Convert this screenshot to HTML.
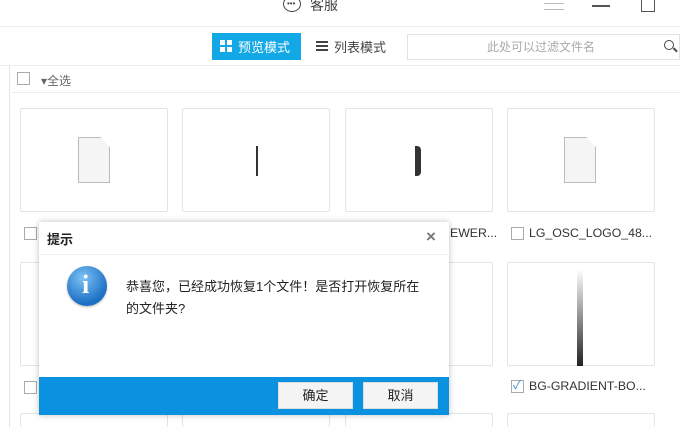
<!DOCTYPE html>
<html><head><meta charset="utf-8"><style>
*{margin:0;padding:0;box-sizing:border-box}
html,body{width:680px;height:427px;overflow:hidden}
body{background:#fff;font-family:"Liberation Sans","Noto Sans CJK SC",sans-serif;position:relative;color:#333}
.a{position:absolute}
.card{position:absolute;width:148px;height:104px;border:1px solid #e4e4e4;border-radius:2px;background:#fff}
.card.s{height:14px;border-bottom:none}
.cb{position:absolute;width:13px;height:13px;border:1px solid #aaa;background:#fff}
.lbl{position:absolute;font-size:12.3px;color:#333;white-space:nowrap}
.doc{position:absolute;width:32px;height:46px;background:#f5f5f5;border:1px solid #bbb;clip-path:polygon(0 0,70% 0,100% 22%,100% 100%,0 100%)}
.btn{position:absolute;top:382px;width:75px;height:27px;background:#f4f4f4;border:1px solid #ddd;font-size:13px;text-align:center;line-height:26px;color:#222}
</style></head><body>
<div class="a" style="left:283px;top:-4px;width:18px;height:16px;border:1.5px solid #444;border-radius:50%"></div>
<div class="a" style="left:287px;top:2px;font-size:8px;line-height:4px;color:#444">•••</div>
<div class="a" style="left:310px;top:-5px;font-size:14px;color:#444">客服</div>
<div class="a" style="left:544px;top:3px;width:20px;height:1px;background:#bbb;box-shadow:0 6px 0 #bbb"></div>
<div class="a" style="left:592px;top:5px;width:18px;height:2px;background:#555"></div>
<div class="a" style="left:641px;top:-3px;width:14px;height:15px;border:1.5px solid #555"></div>
<div class="a" style="left:0;top:26px;width:680px;height:1px;background:#ececec"></div>
<div class="a" style="left:212px;top:33px;width:89px;height:27px;background:#12a8e6"></div>
<div class="a" style="left:220px;top:40px;width:5px;height:5px;background:#fff;box-shadow:7px 0 #fff,0 7px #fff,7px 7px #fff"></div>
<div class="a" style="left:238px;top:37px;font-size:13px;color:#fff">预览模式</div>
<div class="a" style="left:316px;top:41px;width:12px;height:2px;background:#444;box-shadow:0 4px #444,0 8px #444"></div>
<div class="a" style="left:334px;top:37px;font-size:13px;color:#444">列表模式</div>
<div class="a" style="left:407px;top:34px;width:273px;height:26px;border:1px solid #e2e2e2"></div>
<div class="a" style="left:487px;top:38px;font-size:12px;color:#aaa">此处可以过滤文件名</div>
<div class="a" style="left:664px;top:40px;width:10px;height:10px;border:1.5px solid #444;border-radius:50%"></div>
<div class="a" style="left:673px;top:49px;width:5px;height:1.5px;background:#444;transform:rotate(45deg)"></div>
<div class="a" style="left:0;top:65px;width:680px;height:1px;background:#ececec"></div>
<div class="a" style="left:9px;top:66px;width:1px;height:361px;background:#e4e4e4"></div>
<div class="cb" style="left:17px;top:72px"></div>
<div class="a" style="left:41px;top:72px;font-size:12px;color:#666">▾全选</div>
<div class="a" style="left:12px;top:92px;width:668px;height:1px;background:#ececec"></div>
<div class="card" style="left:20px;top:108px"></div>
<div class="card" style="left:182px;top:108px"></div>
<div class="card" style="left:345px;top:108px"></div>
<div class="card" style="left:507px;top:108px"></div>
<div class="doc" style="left:78px;top:137px"></div>
<div class="doc" style="left:564px;top:137px"></div>
<div class="a" style="left:256px;top:146px;width:2px;height:30px;background:#333"></div>
<div class="a" style="left:415px;top:146px;width:6px;height:30px;background:#333;border-radius:0 4px 4px 0"></div>
<div class="cb" style="left:24px;top:227px"></div>
<div class="lbl" style="left:450px;top:226px">EWER...</div>
<div class="cb" style="left:511px;top:227px"></div>
<div class="lbl" style="left:529px;top:226px">LG_OSC_LOGO_48...</div>
<div class="card" style="left:20px;top:262px"></div>
<div class="card" style="left:345px;top:262px"></div>
<div class="card" style="left:507px;top:262px"></div>
<div class="a" style="left:577px;top:269px;width:6px;height:97px;background:linear-gradient(#fff,#222)"></div>
<div class="cb" style="left:24px;top:381px"></div>
<div class="cb" style="left:511px;top:380px;border-color:#aaa"></div>
<div class="a" style="left:513px;top:376px;font-size:12px;color:#3a8fd8">✓</div>
<div class="lbl" style="left:529px;top:379px">BG-GRADIENT-BO...</div>
<div class="card s" style="left:20px;top:413px"></div>
<div class="card s" style="left:182px;top:413px"></div>
<div class="card s" style="left:345px;top:413px"></div>
<div class="card s" style="left:507px;top:413px"></div>
<div class="a" style="left:39px;top:222px;width:410px;height:193px;background:#fff;box-shadow:0 0 6px rgba(0,0,0,.25)"></div>
<div class="a" style="left:39px;top:254px;width:410px;height:1px;background:#f0f0f0"></div>
<div class="a" style="left:47px;top:229px;font-size:13px;font-weight:bold;color:#222">提示</div>
<div class="a" style="left:426px;top:227px;font-size:17px;font-weight:bold;color:#777">×</div>
<div class="a" style="left:67px;top:266px;width:40px;height:40px;border-radius:50%;background:radial-gradient(circle at 40% 30%,#7cc2f5,#1c6fc4 70%);box-shadow:0 1px 2px rgba(0,0,0,.3)"></div>
<div class="a" style="left:82px;top:270px;font-size:26px;font-weight:bold;color:#fff;font-family:'Liberation Serif',serif">i</div>
<div class="a" style="left:126px;top:276px;font-size:13px;line-height:22px;color:#222;width:298px">恭喜您，已经成功恢复1个文件！是否打开恢复所在的文件夹?</div>
<div class="a" style="left:39px;top:377px;width:410px;height:38px;background:#0a92e0"></div>
<div class="btn" style="left:278px">确定</div>
<div class="btn" style="left:363px">取消</div>
</body></html>
